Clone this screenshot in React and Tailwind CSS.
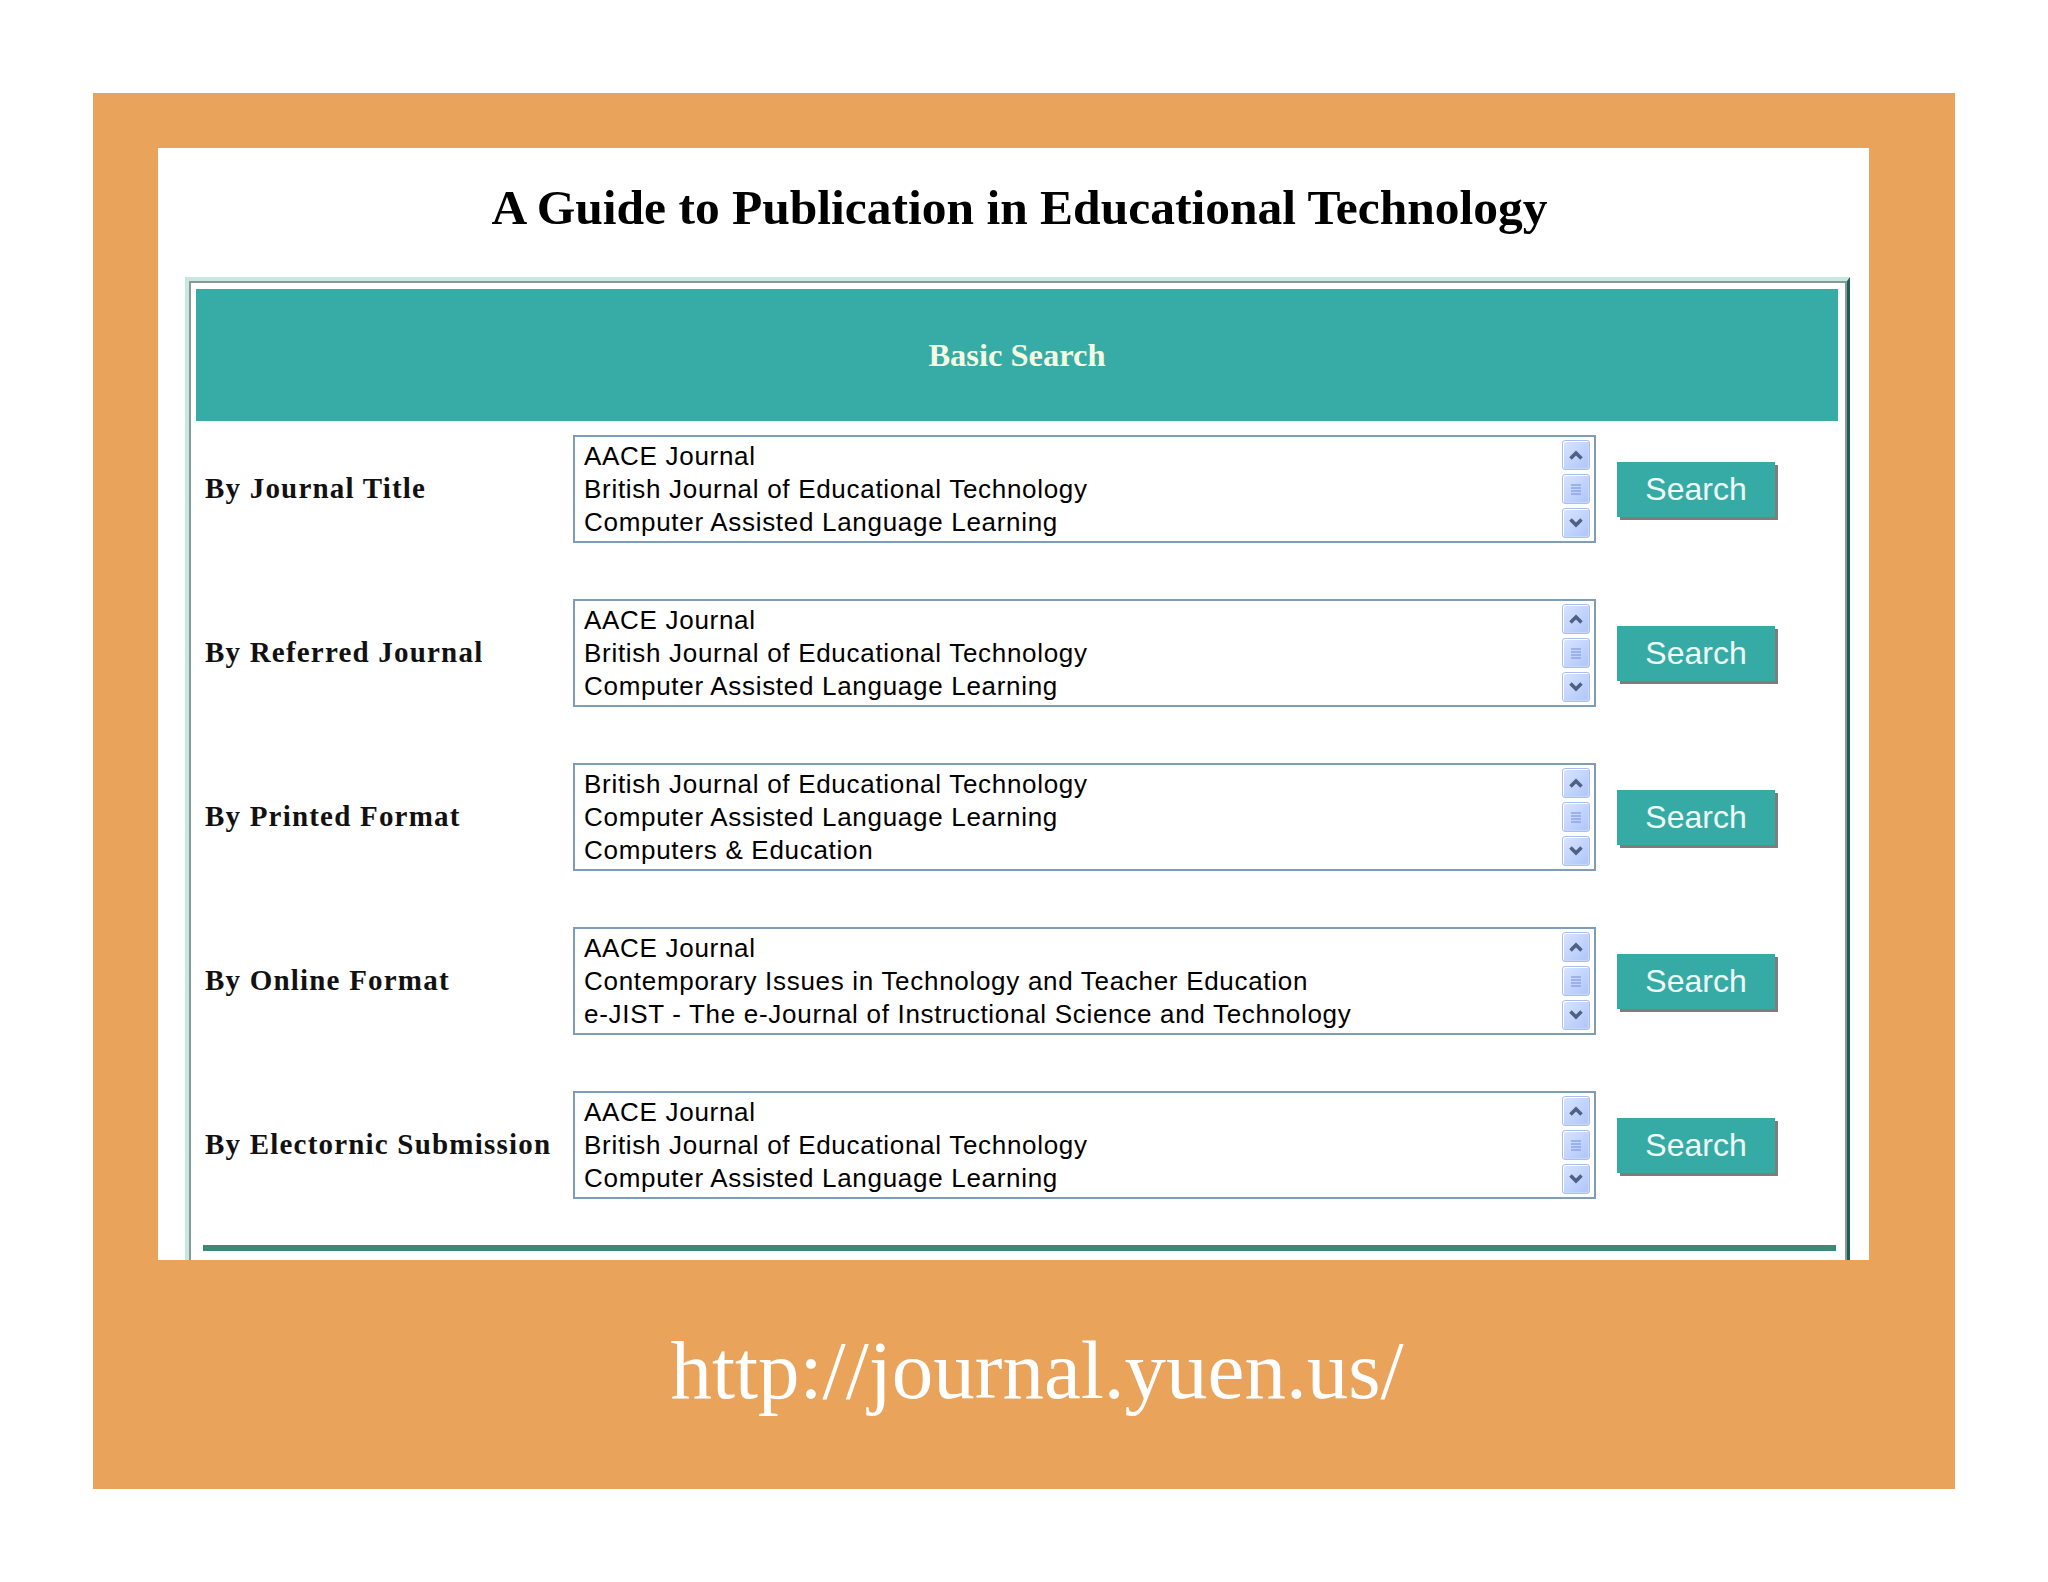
import React from "react";

const JOURNALS = [
  "AACE Journal",
  "British Journal of Educational Technology",
  "Computer Assisted Language Learning",
];

const ROWS = [
  { label: "By Journal Title", items: JOURNALS },
  { label: "By Referred Journal", items: JOURNALS },
  {
    label: "By Printed Format",
    items: [
      "British Journal of Educational Technology",
      "Computer Assisted Language Learning",
      "Computers & Education",
    ],
  },
  {
    label: "By Online Format",
    items: [
      "AACE Journal",
      "Contemporary Issues in Technology and Teacher Education",
      "e-JIST - The e-Journal of Instructional Science and Technology",
    ],
  },
  { label: "By Electornic Submission", items: JOURNALS },
];

const serif = "font-['Liberation_Serif','Times_New_Roman',serif]";
const sans = "font-['Liberation_Sans',Arial,sans-serif]";

// XP-style scroll button
const ScrollBtn = ({ children }) => (
  <div className="h-[30px] w-[28px] rounded-[3px] border border-[#a9bff2] bg-gradient-to-br from-[#d9e5ff] to-[#afc4f8] shadow-[inset_1px_1px_0_#ffffff,inset_-1px_-1px_0_#c8d7fc] flex items-center justify-center">
    {children}
  </div>
);

const ListBox = ({ items }) => (
  <div className="w-[1023px] h-[108px] border-2 border-[#7f9db9] bg-white flex">
    <div className={`flex-1 pl-[9px] pt-[3px] ${sans} text-[26px] tracking-[0.7px] leading-[33px] text-black`}>
      {items.map((t) => (
        <div key={t} className="whitespace-nowrap">
          {t}
        </div>
      ))}
    </div>
    <div className="w-[34px] pt-[3px] pr-[4px] flex flex-col gap-[4px] items-end">
      <ScrollBtn>
        <svg width="16" height="12" viewBox="0 0 16 12">
          <polyline points="2.5,9.5 8,4 13.5,9.5" fill="none" stroke="#4d6185" strokeWidth="3.5" />
        </svg>
      </ScrollBtn>
      <ScrollBtn>
        <svg width="14" height="14" viewBox="0 0 14 14">
          <line x1="2" y1="3" x2="12" y2="3" stroke="#8aa2e2" strokeWidth="1.4" />
          <line x1="2" y1="6" x2="12" y2="6" stroke="#8aa2e2" strokeWidth="1.4" />
          <line x1="2" y1="9" x2="12" y2="9" stroke="#8aa2e2" strokeWidth="1.4" />
          <line x1="2" y1="12" x2="12" y2="12" stroke="#8aa2e2" strokeWidth="1.4" />
        </svg>
      </ScrollBtn>
      <ScrollBtn>
        <svg width="16" height="12" viewBox="0 0 16 12">
          <polyline points="2.5,2.5 8,8 13.5,2.5" fill="none" stroke="#4d6185" strokeWidth="3.5" />
        </svg>
      </ScrollBtn>
    </div>
  </div>
);

const Row = ({ label, items }) => (
  <div className="flex items-center h-[108px]">
    <div className={`w-[377px] pl-[9px] ${serif} font-bold text-[29px] tracking-[1.2px] text-[#111] whitespace-nowrap`}>
      {label}
    </div>
    <ListBox items={items} />
    <button className={`ml-[21px] w-[158px] h-[55px] bg-[#36aba5] shadow-[3px_3px_0_#7d7d7d] ${sans} text-[32px] text-[#effbf6] leading-none`}>
      Search
    </button>
  </div>
);

export default function App() {
  return (
    <div className="w-[2048px] h-[1582px] bg-white pt-[93px] pl-[93px]">
      <div className="w-[1862px] h-[1396px] bg-[#e9a35b] pt-[55px] pl-[65px] flex flex-col">
        {/* slide panel */}
        <div className="w-[1711px] h-[1112px] bg-white overflow-hidden flex flex-col">
          <div className="h-[129px] pt-[35px] pl-[12px] text-center">
            <h1 className={`${serif} font-bold text-[49.5px] leading-[49px] text-black`}>
              A Guide to Publication in Educational Technology
            </h1>
          </div>

          <div className="ml-[27px] w-[1665px] flex-1 border-t-4 border-l-4 border-r-[3px] border-t-[#c5e9e1] border-l-[#c5e9e1] border-r-[#1f5e56]">
            <div className="h-full border-t-2 border-l-2 border-r-2 border-[#8a9896] pt-[6px] pl-[5px] pr-[7px]">
              <div className="h-[132px] bg-[#37aba6] flex items-center justify-center">
                <span className={`${serif} font-bold text-[32.5px] text-[#f3fbe3]`}>Basic Search</span>
              </div>

              <div className="pt-[14px] flex flex-col gap-[56px]">
                {ROWS.map((r) => (
                  <Row key={r.label} label={r.label} items={r.items} />
                ))}
              </div>

              <div className="mt-[46px] ml-[7px] w-[1633px] h-[6px] bg-[#3f8878]" />
            </div>
          </div>
        </div>

        <div className={`mt-[69px] w-[1711px] pl-[47px] text-center ${serif} text-[83px] leading-[82px] text-white`}>
          http://journal.yuen.us/
        </div>
      </div>
    </div>
  );
}
